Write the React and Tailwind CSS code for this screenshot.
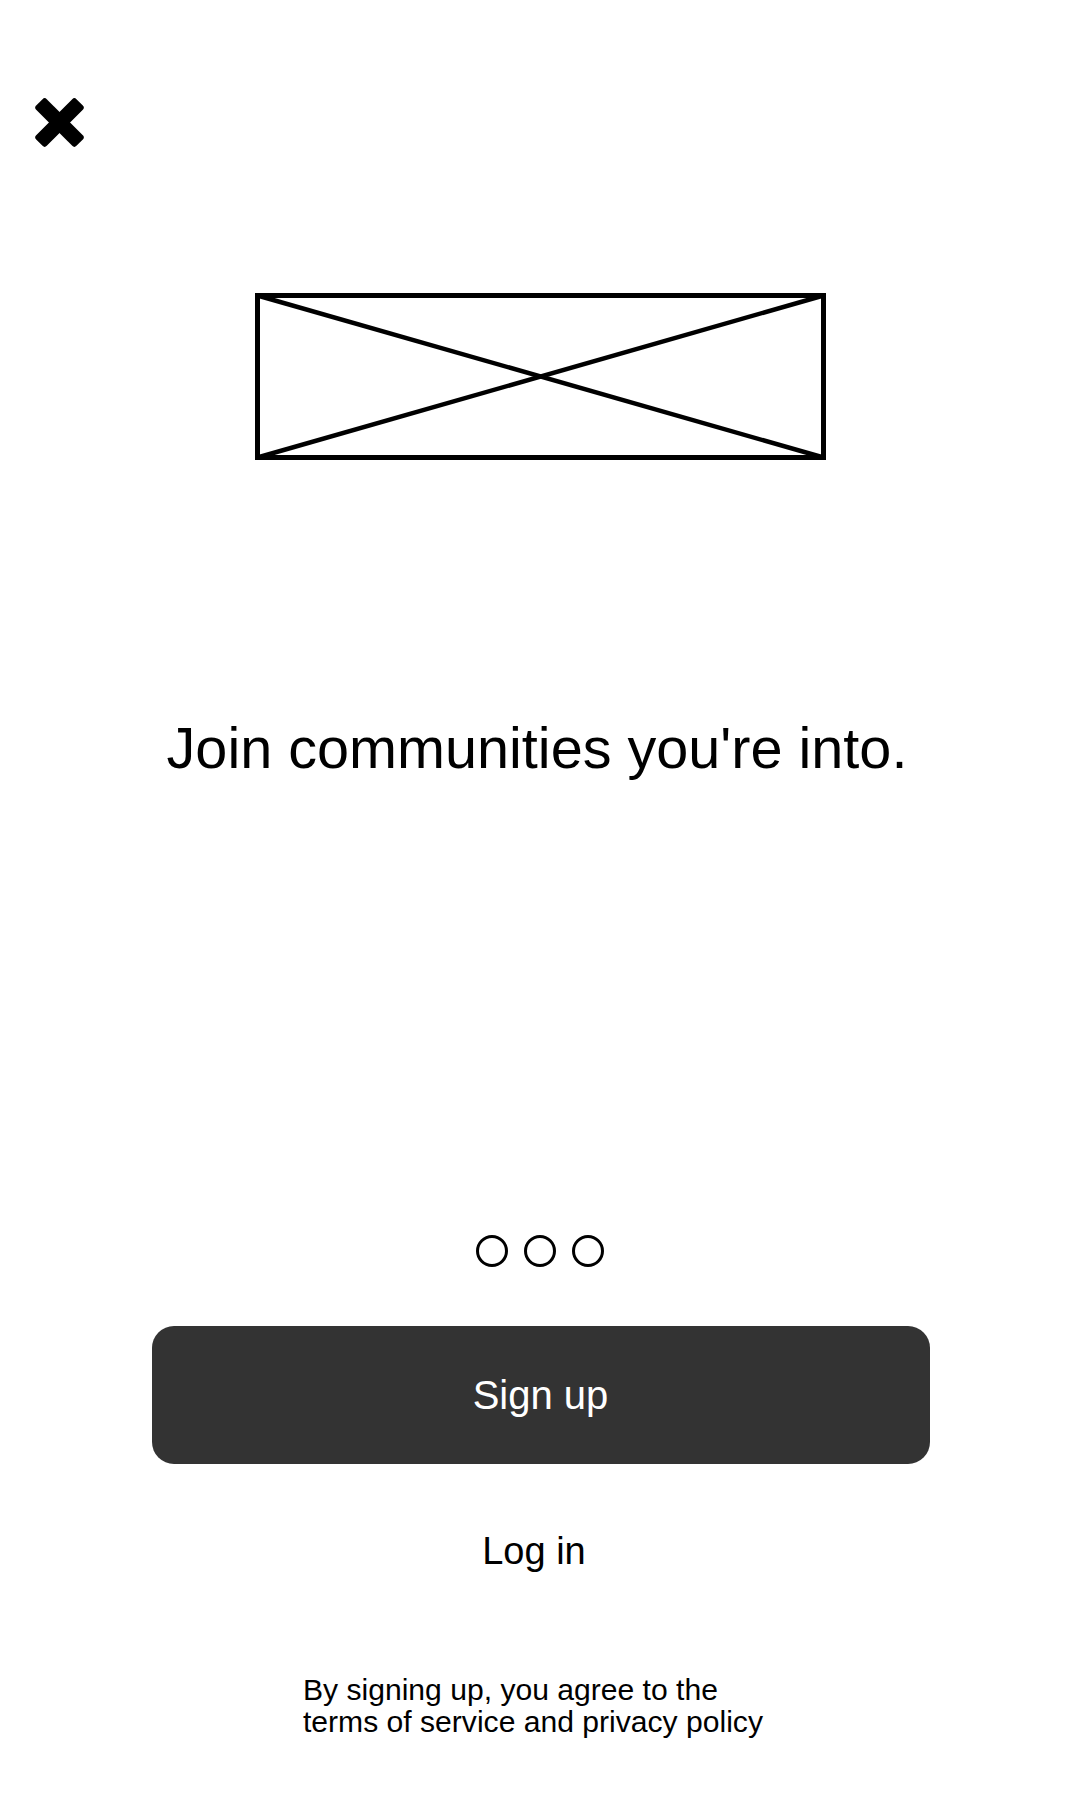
import React from "react";

function CloseIcon() {
  return (
    <svg width="51" height="51" viewBox="0 0 51 51" aria-label="Close">
      <rect x="-3" y="18" width="57" height="15" rx="3" fill="#000" transform="rotate(45 25.5 25.5)" />
      <rect x="-3" y="18" width="57" height="15" rx="3" fill="#000" transform="rotate(-45 25.5 25.5)" />
    </svg>
  );
}

function Placeholder() {
  return (
    <svg width="571" height="167" viewBox="0 0 571 167" className="block">
      <rect x="2.5" y="2.5" width="566" height="162" fill="none" stroke="#000" strokeWidth="5" />
      <line x1="2.5" y1="2.5" x2="568.5" y2="164.5" stroke="#000" strokeWidth="4.5" />
      <line x1="2.5" y1="164.5" x2="568.5" y2="2.5" stroke="#000" strokeWidth="4.5" />
    </svg>
  );
}

export default function App() {
  return (
    <div className="w-[1080px] h-[1800px] bg-white text-black font-['Liberation_Sans',Arial,sans-serif] flex flex-col">
      <div className="pt-[97px] pl-[34px]">
        <button className="block w-[51px] h-[51px]">
          <CloseIcon />
        </button>
      </div>

      <div className="mt-[145px] flex justify-center pl-[1px]">
        <Placeholder />
      </div>

      <h1 className="mt-[259px] text-center text-[57.6px] leading-[58px] font-normal pr-[6px]">
        Join communities you're into.
      </h1>

      <div className="mt-[458px] flex justify-center gap-[16px]">
        <span className="w-[32px] h-[32px] rounded-full border-[3px] border-black" />
        <span className="w-[32px] h-[32px] rounded-full border-[3px] border-black" />
        <span className="w-[32px] h-[32px] rounded-full border-[3px] border-black" />
      </div>

      <div className="mt-[59px] flex justify-center pl-[1px]">
        <button className="w-[778px] h-[138px] rounded-[22px] bg-[#333333] text-white text-[40px] leading-none flex items-center justify-center">
          Sign up
        </button>
      </div>

      <div className="mt-[68px] flex justify-center pr-[12px]">
        <button className="text-[38px] leading-[38px]">Log in</button>
      </div>

      <p className="mt-[104px] pl-[303px] text-[30.1px] leading-[32px]">
        By signing up, you agree to the
        <br />
        terms of service and privacy policy
      </p>
    </div>
  );
}
